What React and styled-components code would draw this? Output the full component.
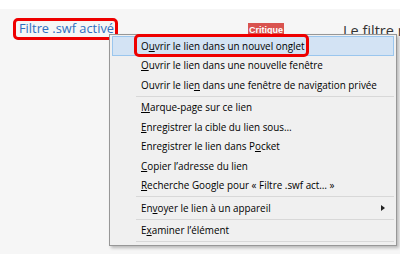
import React from "react";
import styled, { createGlobalStyle } from "styled-components";

const Global = createGlobalStyle`
  html, body { margin: 0; padding: 0; }
  body { width: 400px; height: 254px; overflow: hidden; background: #f6f6f6; font-family: "Open Sans", "Noto Sans", sans-serif; }
`;

const Page = styled.div`
  position: relative;
  width: 400px;
  height: 254px;
  overflow: hidden;
  background: #f6f6f6;
`;

const TopBand = styled.div`
  height: 9px;
  background: #ffffff;
`;

const Row = styled.div`
  display: flex;
  align-items: flex-start;
  height: 60px;
  padding: 7px 0 0 13px;
  box-sizing: border-box;
`;

const LinkCell = styled.div`
  width: 235px;
  flex: none;
`;

const Framed = styled.span`
  display: inline-block;
  border: 3px solid #ee0000;
  border-radius: 5px;
  padding: 0 1px 0 3px;
  height: 22px;
  box-sizing: border-box;
  font-size: 12.8px;
  color: #2f6fc1;
  line-height: 15px;
  white-space: nowrap;
`;

const Badge = styled.span`
  flex: none;
  margin-top: 7px;
  width: 36px;
  height: 16px;
  background: #d9534f;
  color: #fff;
  font-family: "Liberation Sans", sans-serif;
  font-weight: bold;
  font-size: 9px;
  line-height: 15px;
  text-align: center;
`;

const Desc = styled.div`
  margin-left: 59px;
  margin-top: 6px;
  font-size: 14.5px;
  color: #333;
  white-space: nowrap;
  line-height: 18px;
`;

const Menu = styled.div`
  position: absolute;
  left: 109px;
  top: 34px;
  width: 288px;
  height: 212px;
  box-sizing: border-box;
  background: #f0f0f0;
  border: 1px solid #979797;
  box-shadow: 2px 2px 3px rgba(0, 0, 0, 0.25);
  padding: 1px 2px;
  font-family: "Open Sans", "Noto Sans", sans-serif;
  font-size: 9.9px;
  color: #000;
`;

const Item = styled.div`
  position: relative;
  display: flex;
  align-items: center;
  height: 19.5px;
  box-sizing: border-box;
  padding-left: 28px;
  white-space: nowrap;
  border: 1px solid ${(p) => (p.$hover ? "#9ac6ee" : "transparent")};
  background: ${(p) => (p.$hover ? "#d3e3f4" : "transparent")};
`;

const Label = styled.span`
  white-space: pre;
  ${(p) =>
    p.$framed &&
    `
    display: flex;
    align-items: center;
    height: 23px;
    box-sizing: border-box;
    margin: -1px 0 -1px -7px;
    padding: 0 1px 0 4px;
    border: 3px solid #ee0000;
    border-radius: 5px;
  `}
`;

const Sep = styled.div`
  height: 3px;
  margin-left: 24px;
  display: flex;
  align-items: center;
  &::after {
    content: "";
    flex: 1;
    height: 1px;
    background: #d8d8d8;
  }
`;

const Arrow = styled.span`
  position: absolute;
  right: 8px;
  top: 6px;
  width: 0;
  height: 0;
  border-top: 3.5px solid transparent;
  border-bottom: 3.5px solid transparent;
  border-left: 4px solid #222;
`;

const items = [
  [["O", "u", "vrir le lien dans un nouvel onglet"]],
  [["", "O", "uvrir le lien dans une nouvelle fenêtre"]],
  [["Ouvrir le lie", "n", " dans une fenêtre de navigation privée"]],
  "sep",
  [["", "M", "arque-page sur ce lien"]],
  [["", "E", "nregistrer la cible du lien sous…"]],
  [["Enregistrer le lien dans P", "o", "cket"]],
  [["", "C", "opier l’adresse du lien"]],
  [["", "R", "echerche Google pour « Filtre .swf act… »"]],
  "sep",
  [["En", "v", "oyer le lien à un appareil"], "arrow"],
  "sep",
  [["E", "x", "aminer l’élément"]],
  "sep",
];

export default function App() {
  return (
    <Page>
      <Global />
      <TopBand />
      <Row>
        <LinkCell>
          <Framed>Filtre .swf activé</Framed>
        </LinkCell>
        <Badge>Critique</Badge>
        <Desc>Le filtre masque</Desc>
      </Row>
      <Menu>
        {items.map((it, i) => {
          if (it === "sep") return <Sep key={i} />;
          const [t, extra] = it;
          return (
            <Item key={i} $hover={i === 0}>
              <Label $framed={i === 0}>
                {t[0]}
                <u>{t[1]}</u>
                {t[2]}
              </Label>
              {extra === "arrow" && <Arrow />}
            </Item>
          );
        })}
      </Menu>
    </Page>
  );
}
